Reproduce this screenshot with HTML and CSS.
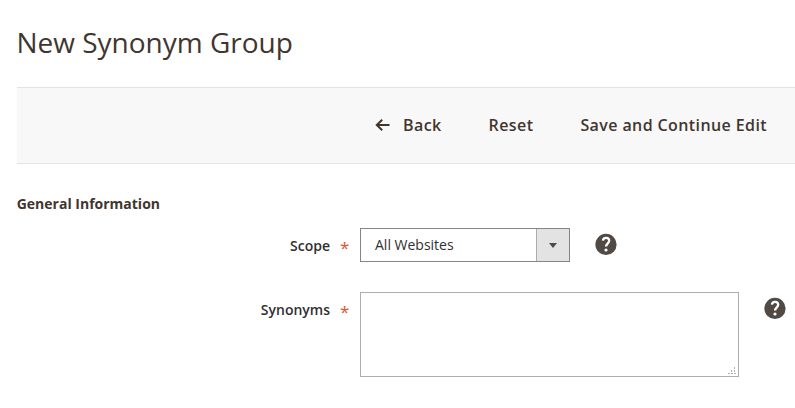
FILE: index.html
```html
<!DOCTYPE html>
<html lang="en">
<head>
<meta charset="utf-8">
<title>New Synonym Group</title>
<link rel="stylesheet" href="styles.css">
</head>
<body>
<main class="page">
  <h1 class="title">New Synonym Group</h1>
  <div class="toolbar">
    <button class="action back"><svg class="arrow" viewBox="0 0 15 12" width="15" height="12"><path d="M14.5 6H2M7.2 .8L1.8 6l5.4 5.2"/></svg>Back</button>
    <button class="action">Reset</button>
    <button class="action">Save and Continue Edit</button>
  </div>
  <h2 class="section">General Information</h2>
  <div class="field scope">
    <label class="label">Scope<span class="star">*</span></label>
    <div class="select"><span class="value">All Websites</span><span class="drop"></span></div>
    <svg class="help" viewBox="0 0 22 22" width="22" height="22"><circle cx="11" cy="11.4" r="10.6"/><path d="M7.9 7.7C8.3 3.6 14.3 4.1 14.2 7.8C14.1 10.3 11.1 10.5 11.1 13.6"/><circle class="dot" cx="11" cy="17" r="1.6"/></svg>
  </div>
  <div class="field synonyms">
    <label class="label">Synonyms<span class="star">*</span></label>
    <div class="box">
      <textarea class="area"></textarea>
      <svg class="grip" viewBox="0 0 8 8" width="8" height="8"><path d="M6 0h1v2h-1zM3 3h1v2h-1zM6 3h1v2h-1zM0 6h2v1h-2zM3 6h2v1h-2zM6 6h2v1h-2z"/></svg>
    </div>
    <svg class="help" viewBox="0 0 22 22" width="22" height="22"><circle cx="11" cy="11.4" r="10.6"/><path d="M7.9 7.7C8.3 3.6 14.3 4.1 14.2 7.8C14.1 10.3 11.1 10.5 11.1 13.6"/><circle class="dot" cx="11" cy="17" r="1.6"/></svg>
  </div>
</main>
</body>
</html>
```
FILE: styles.css
```css
* { box-sizing: border-box; }
body { margin: 0; background: #fff; color: #41362f; font-family: "Open Sans", sans-serif; overflow: hidden; }
.page { padding: 23px 0 0 17px; }
.title { margin: 0 0 0 -.6px; height: 64px; font-size: 28px; line-height: 38px; font-weight: 400; }
.toolbar { height: 77px; display: flex; align-items: center; justify-content: flex-end; gap: 47px; padding: 0 28px 2px 0; background: #f8f8f8; border: solid #e3e3e3; border-width: 1px 0; }
.action { display: flex; align-items: center; padding: 0; border: 0; background: none; font: 600 16px/22px "Open Sans", sans-serif; letter-spacing: .4px; color: #41362f; }
.arrow { margin-right: 13px; fill: none; stroke: #41362f; stroke-width: 2; }
.section { margin: 30px 0 0 -.3px; height: 34px; font-size: 14px; line-height: 20px; font-weight: 700; color: #41362f; }
.field { display: flex; align-items: flex-start; }
.label { width: 343px; padding: 1px 12px 0 0; display: flex; justify-content: flex-end; font-size: 14px; line-height: 34px; font-weight: 600; color: #303030; }
.star { width: 8px; margin: 2px 0 -2px 10px; color: #e9502b; font-size: 17px; font-weight: 400; }
.select { width: 210px; height: 34px; display: flex; border: 1px solid #8a837f; font-size: 14px; line-height: 32px; color: #303030; }
.value { flex: 1; padding-left: 14px; }
.drop { width: 33px; display: flex; align-items: center; justify-content: center; background: #e3e3e3; border-left: 1px solid #adadad; }
.drop::after { content: ""; border: solid transparent; border-width: 5px 4px 0; border-top-color: #514943; }
.help { margin: 5px 0 0 25px; fill: #514943; }
.help path { fill: none; stroke: #fff; stroke-width: 2.3; }
.help .dot { fill: #fff; }
.synonyms { margin-top: 29px; }
.box { position: relative; display: flex; }
.area { width: 379px; height: 85px; margin: 0; border: 1px solid #adadad; background: #fff; resize: none; }
.grip { position: absolute; right: 3px; bottom: 2px; fill: #b0b0b0; shape-rendering: crispEdges; }
```
